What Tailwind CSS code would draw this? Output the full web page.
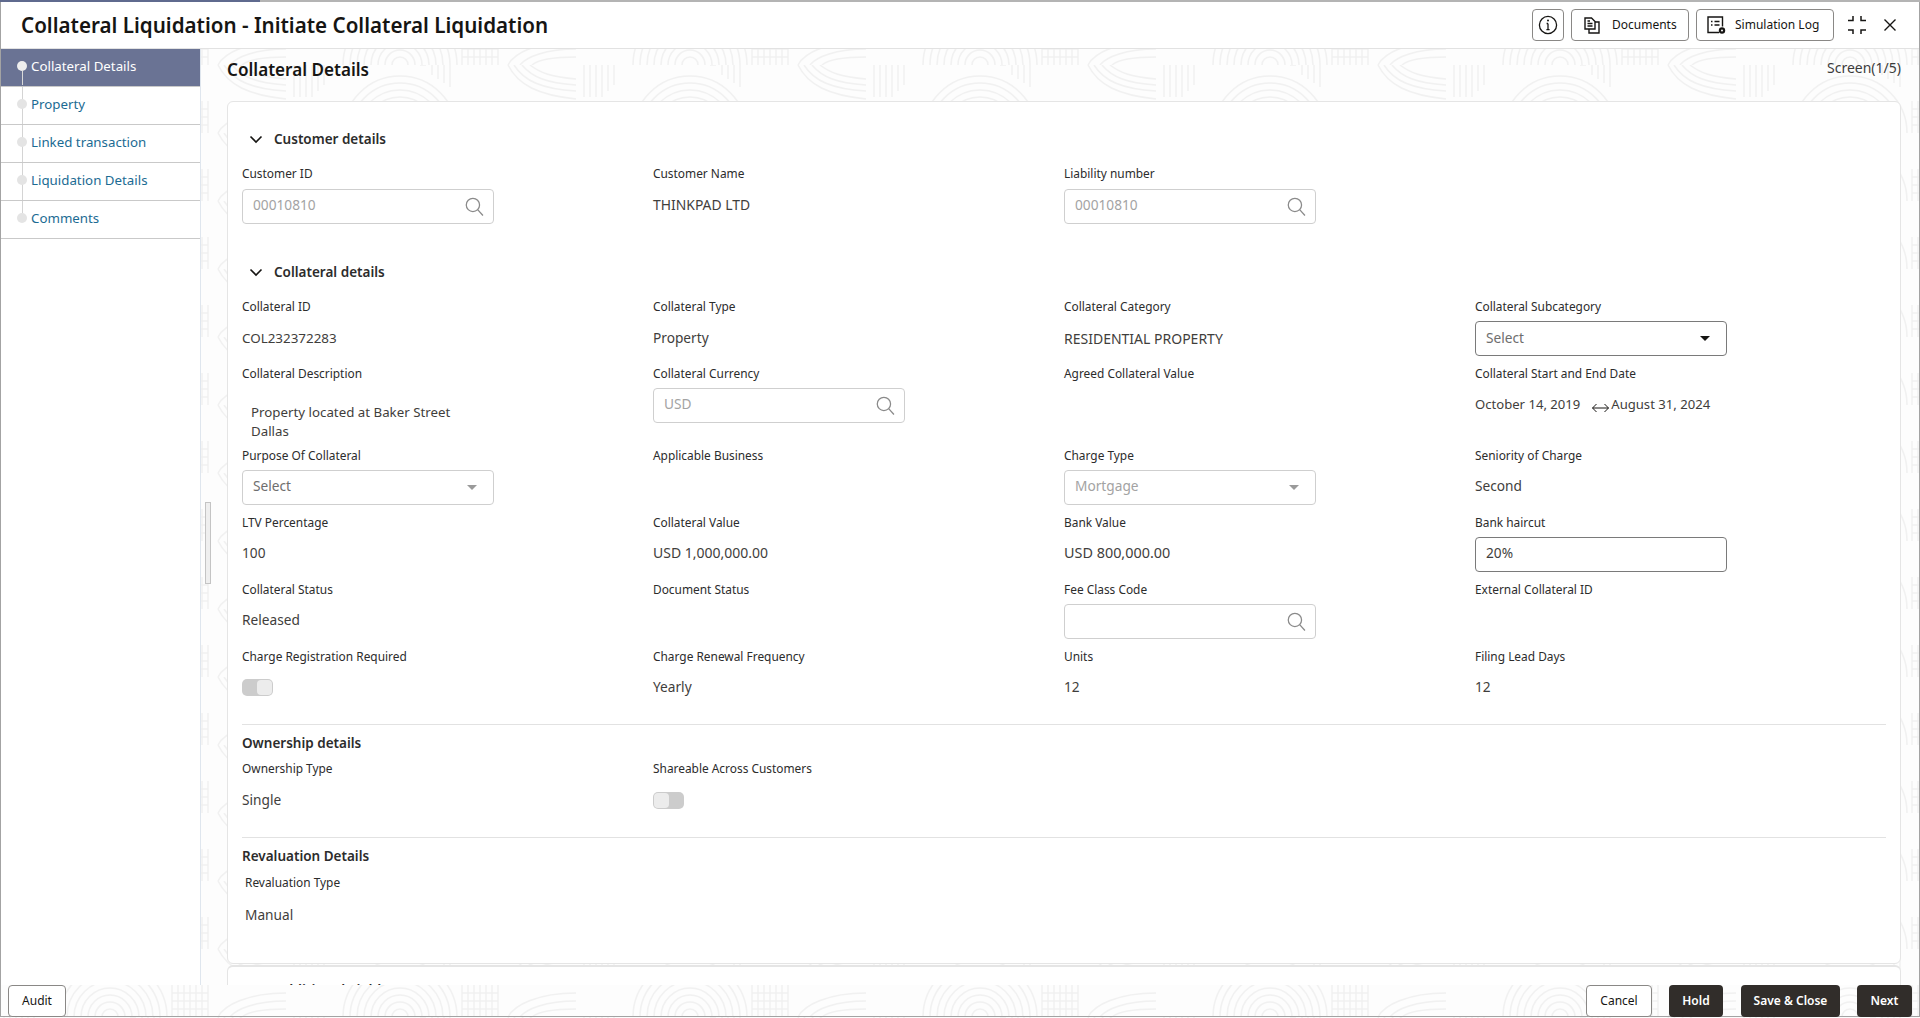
<!DOCTYPE html>
<html lang="en">
  <head>
    <meta charset="UTF-8" />
    <title>Collateral Liquidation</title>
    <script src="https://cdn.jsdelivr.net/npm/@tailwindcss/browser@4"></script>
  </head>
  <body class="bg-white font-['Noto_Sans',sans-serif] text-[#161513]">
    <div class="relative w-[1920px] h-[1018px] overflow-hidden bg-white">
      <!-- background swirl texture -->
      <svg class="absolute inset-0" width="1920" height="1018">
        <defs>
          <pattern id="swirl" x="0" y="65" width="290" height="68" patternUnits="userSpaceOnUse">
            <rect width="290" height="68" fill="#fdfdfd" />
            <g fill="none" stroke="#f1f1f1" stroke-width="1.5">
              <circle cx="110" cy="68" r="8" />
              <circle cx="110" cy="68" r="15" />
              <circle cx="110" cy="68" r="22" />
              <circle cx="110" cy="68" r="29" />
              <circle cx="110" cy="68" r="36" />
              <circle cx="110" cy="68" r="43" />
              <circle cx="110" cy="68" r="50" />
              <circle cx="110" cy="68" r="57" />
              <path d="M172 36V68M178 36V68M184 36V68M190 36V68M196 36V68M202 36V68M208 36V68M172 44H208M172 52H208M172 60H208" />
              <path d="M218 0c10 20 30 30 68 34M224 0c10 16 28 24 62 26M232 0c10 12 24 18 54 20M240 0c10 8 22 12 46 14M218 68c6-12 30-24 68-24M230 68c6-8 26-16 56-16M242 68c6-5 22-8 44-8" />
              <path d="M4 0V32M10 0V32M16 0V32M22 0V32M28 0V26M34 0V20" />
              <path d="M130 0h6M142 0V10M148 0V14M154 0V18M160 0V22" />
            </g>
          </pattern>
        </defs>
        <rect width="1920" height="1018" fill="url(#swirl)" />
      </svg>

      <div class="relative flex flex-col h-[1017px] border-x border-b border-[#a3a3a3]">
        <!-- progress strip -->
        <div class="flex h-[2px] bg-[#b4b4b4] -mx-px shrink-0">
          <div class="w-[260px] bg-[#5f6a8e]"></div>
        </div>

        <header class="flex items-center h-[47px] pl-5 pr-[23px] bg-white border-b border-[#e2e2e2] shrink-0">
          <h1 class="text-[20.6px] leading-none font-semibold text-[#161513]">Collateral Liquidation - Initiate Collateral Liquidation</h1>
          <div class="ml-auto flex items-center">
            <button class="flex items-center justify-center w-8 h-8 border border-[#8a8886] rounded-[4px]">
              <svg width="20" height="20" viewBox="0 0 20 20" fill="none" stroke="#161513" stroke-width="1.3"><circle cx="10" cy="10" r="8.600" /><path d="M10 8.500v6.200M8.400 14.700h3.200M8.600 8.500H10" /><circle cx="10" cy="5.600" r="1" fill="#161513" stroke="none" /></svg>
            </button>
            <button class="flex items-center w-[118px] h-8 ml-[7px] pl-[12px] border border-[#8a8886] rounded-[4px] text-[12px]">
              <svg width="16" height="17" viewBox="0 0 16 17" fill="none" stroke="#161513" stroke-width="1.400"><path d="M1 1h6.500L11 4.500V12H1z" /><path d="M3.500 6.500h5M3.500 9h5M3.500 4h2.500" /><path d="M11 5h4v11H5V12" /></svg>
              <span class="ml-[12px]">Documents</span>
            </button>
            <button class="flex items-center w-[138px] h-8 ml-[7px] pl-[10px] border border-[#8a8886] rounded-[4px] text-[12px]">
              <svg width="19" height="18" viewBox="0 0 19 18" fill="none" stroke="#161513" stroke-width="1.400"><path d="M12 16.500H1V1h14.500v9.500" /><path d="M4 5.500h1.500M7.500 5.500h5M4 9h1.500M7.500 9h5" /><circle cx="15" cy="14.500" r="3.200" fill="#161513" stroke="none" /><circle cx="15" cy="14.500" r="1" fill="#fff" stroke="none" /></svg>
              <span class="ml-[9px]">Simulation Log</span>
            </button>
            <button class="ml-[13px]">
              <svg class="block" width="20" height="20" viewBox="0 0 20 20" fill="none" stroke="#161513" stroke-width="1.500"><path d="M1 5.500h5V1M14 1v4.500h5M1 15h5v4M19 15h-5v4" /></svg>
            </button>
            <button class="ml-[17px]">
              <svg class="block" width="12" height="12" viewBox="0 0 12 12" fill="none" stroke="#161513" stroke-width="1.400"><path d="M.5.5l11 11M11.500.5l-11 11" /></svg>
            </button>
          </div>
        </header>

        <div class="flex flex-1 min-h-0">
          <!-- train -->
          <nav class="w-[199px] bg-white shrink-0 text-[13.3px] text-[#1b6b93]">
            <a class="relative flex items-center h-[38px] pb-[2px] pl-[30px] bg-[#6a7394] border-b border-[#c9c9c9] text-white">
              <i class="absolute left-[16px] top-[12px] w-[10px] h-[10px] rounded-full bg-[#eeeeee]"></i>
              <i class="absolute left-[21px] top-[22px] w-px h-[14px] bg-[#d9d9d9]"></i>
              Collateral Details
            </a>
            <a class="relative flex items-center h-[38px] pb-[2px] pl-[30px] border-b border-[#c9c9c9]">
              <i class="absolute left-[21px] top-0 w-px h-[37px] bg-[#d4d4d4]"></i>
              <i class="absolute left-[16px] top-[12px] w-[10px] h-[10px] rounded-full bg-[#e4e4e4]"></i>
              Property
            </a>
            <a class="relative flex items-center h-[38px] pb-[2px] pl-[30px] border-b border-[#c9c9c9]">
              <i class="absolute left-[21px] top-0 w-px h-[37px] bg-[#d4d4d4]"></i>
              <i class="absolute left-[16px] top-[12px] w-[10px] h-[10px] rounded-full bg-[#e4e4e4]"></i>
              Linked transaction
            </a>
            <a class="relative flex items-center h-[38px] pb-[2px] pl-[30px] border-b border-[#c9c9c9]">
              <i class="absolute left-[21px] top-0 w-px h-[37px] bg-[#d4d4d4]"></i>
              <i class="absolute left-[16px] top-[12px] w-[10px] h-[10px] rounded-full bg-[#e4e4e4]"></i>
              Liquidation Details
            </a>
            <a class="relative flex items-center h-[38px] pb-[2px] pl-[30px] border-b border-[#c9c9c9]">
              <i class="absolute left-[21px] top-0 w-[1px] h-[12px] bg-[#d4d4d4]"></i>
              <i class="absolute left-[16px] top-[12px] w-[10px] h-[10px] rounded-full bg-[#e4e4e4]"></i>
              Comments
            </a>
          </nav>

          <!-- main content -->
          <main class="relative flex-1 min-w-0 overflow-hidden border-l border-[#dfe6ee] pl-[26px] pr-[18px]">
            <div class="absolute left-[4px] top-[453px] w-[6px] h-[82px] border border-[#c4c4c4] bg-[#efefef]"></div>

            <div class="flex items-start justify-between h-[52px] pt-[8px]">
              <h2 class="text-[17.1px] leading-[26px] font-semibold">Collateral Details</h2>
              <span class="text-[14px] leading-[22px] text-[#3c3c3c]">Screen(1/5)</span>
            </div>

            <section class="h-[863px] pl-[14px] pt-[25px] bg-white border border-[#e5e5e5] rounded-[6px]">
              <div class="flex items-center h-[24px] mb-[13px] text-[13.5px] font-semibold text-[#2c2c2c]">
                <svg class="ml-[7px] mr-[11px]" width="14" height="9" viewBox="0 0 14 9" fill="none" stroke="#161513" stroke-width="1.600"><path d="M1.500 1.500L7 7l5.500-5.500" /></svg>
                Customer details
              </div>
              <div class="grid grid-cols-[411px_411px_411px_411px] text-[#3f3e3c]">
                <div>
                  <div class="h-[18px] mb-[7px] text-[11.9px] leading-[18px] text-[#2c2c2c]">Customer ID</div>
                  <div class="flex items-center justify-between w-[252px] h-[35px] pl-[10px] pr-[9px] border border-[#cfcfcf] rounded-[4px] text-[13.7px] text-[#a3a3a3]">
                    <span class="pb-[2px]">00010810</span>
                    <svg width="19" height="19" viewBox="0 0 18 18" fill="none" stroke="#8a8a8a" stroke-width="1.200"><circle cx="7.500" cy="7.500" r="6.300" /><path d="M12 12l5 5.500" /></svg>
                  </div>
                </div>
                <div>
                  <div class="h-[18px] mb-[7px] text-[11.9px] leading-[18px] text-[#2c2c2c]">Customer Name</div>
                  <div class="flex items-center h-[34px] pb-[2px] text-[13.900px]">THINKPAD LTD</div>
                </div>
                <div>
                  <div class="h-[18px] mb-[7px] text-[11.9px] leading-[18px] text-[#2c2c2c]">Liability number</div>
                  <div class="flex items-center justify-between w-[252px] h-[35px] pl-[10px] pr-[9px] border border-[#cfcfcf] rounded-[4px] text-[13.7px] text-[#a3a3a3]">
                    <span class="pb-[2px]">00010810</span>
                    <svg width="19" height="19" viewBox="0 0 18 18" fill="none" stroke="#8a8a8a" stroke-width="1.200"><circle cx="7.500" cy="7.500" r="6.300" /><path d="M12 12l5 5.500" /></svg>
                  </div>
                </div>
              </div>

              <div class="flex items-center h-[24px] mt-[36px] mb-[13px] text-[13.5px] font-semibold text-[#2c2c2c]">
                <svg class="ml-[7px] mr-[11px]" width="14" height="9" viewBox="0 0 14 9" fill="none" stroke="#161513" stroke-width="1.600"><path d="M1.500 1.500L7 7l5.500-5.500" /></svg>
                Collateral details
              </div>

              <div class="grid grid-cols-[411px_411px_411px_411px] auto-rows-[67px] text-[13.7px] text-[#3f3e3c]">
                <div>
                  <div class="h-[18px] mb-[6px] text-[11.9px] leading-[18px] text-[#2c2c2c]">Collateral ID</div>
                  <div class="flex items-center h-[34px] text-[13.400px]">COL232372283</div>
                </div>
                <div>
                  <div class="h-[18px] mb-[6px] text-[11.9px] leading-[18px] text-[#2c2c2c]">Collateral Type</div>
                  <div class="flex items-center h-[34px]">Property</div>
                </div>
                <div>
                  <div class="h-[18px] mb-[6px] text-[11.9px] leading-[18px] text-[#2c2c2c]">Collateral Category</div>
                  <div class="flex items-center h-[34px] text-[14px]">RESIDENTIAL PROPERTY</div>
                </div>
                <div>
                  <div class="h-[18px] mb-[6px] text-[11.9px] leading-[18px] text-[#2c2c2c]">Collateral Subcategory</div>
                  <div class="flex items-center justify-between w-[252px] h-[35px] pl-[10px] pr-[16px] border border-[#7a7a7a] rounded-[4px] text-[#6e6e6e]">
                    <span class="pb-[1px]">Select</span>
                    <i class="border-x-[5px] border-t-[5px] border-x-transparent border-t-[#161513]"></i>
                  </div>
                </div>

                <div class="h-[82px]">
                  <div class="h-[18px] mb-[21px] text-[11.9px] leading-[18px] text-[#2c2c2c]">Collateral Description</div>
                  <div class="pl-[9px] text-[13.3px] leading-[19px]">Property located at Baker Street<br />Dallas</div>
                </div>
                <div>
                  <div class="h-[18px] mb-[6px] text-[11.9px] leading-[18px] text-[#2c2c2c]">Collateral Currency</div>
                  <div class="flex items-center justify-between w-[252px] h-[35px] pl-[10px] pr-[9px] border border-[#cfcfcf] rounded-[4px] text-[#a3a3a3]">
                    <span class="pb-[2px]">USD</span>
                    <svg width="19" height="19" viewBox="0 0 18 18" fill="none" stroke="#8a8a8a" stroke-width="1.200"><circle cx="7.500" cy="7.500" r="6.300" /><path d="M12 12l5 5.500" /></svg>
                  </div>
                </div>
                <div>
                  <div class="h-[18px] text-[11.9px] leading-[18px] text-[#2c2c2c]">Agreed Collateral Value</div>
                </div>
                <div>
                  <div class="h-[18px] mb-[6px] text-[11.9px] leading-[18px] text-[#2c2c2c]">Collateral Start and End Date</div>
                  <div class="flex items-center h-[34px] pb-[1px] text-[13.100px]">
                    October 14, 2019
                    <svg class="ml-[12px] mt-[6px]" width="17" height="10" viewBox="0 0 17 10" fill="none" stroke="#161513" stroke-width="1"><path d="M.5 5h16M4.500 1L.5 5l4 4M12.500 1l4 4-4 4" /></svg>
                    <span class="ml-[2px]">August 31, 2024</span>
                  </div>
                </div>

                <div class="mt-[15px]">
                  <div class="h-[18px] mb-[6px] text-[11.9px] leading-[18px] text-[#2c2c2c]">Purpose Of Collateral</div>
                  <div class="flex items-center justify-between w-[252px] h-[35px] pl-[10px] pr-[16px] border border-[#cfcfcf] rounded-[4px] text-[#6e6e6e]">
                    <span class="pb-[2px]">Select</span>
                    <i class="border-x-[5px] border-t-[5px] border-x-transparent border-t-[#9a9a9a]"></i>
                  </div>
                </div>
                <div class="mt-[15px]">
                  <div class="h-[18px] text-[11.9px] leading-[18px] text-[#2c2c2c]">Applicable Business</div>
                </div>
                <div class="mt-[15px]">
                  <div class="h-[18px] mb-[6px] text-[11.9px] leading-[18px] text-[#2c2c2c]">Charge Type</div>
                  <div class="flex items-center justify-between w-[252px] h-[35px] pl-[10px] pr-[16px] border border-[#cfcfcf] rounded-[4px] text-[#a3a3a3]">
                    <span class="pb-[2px]">Mortgage</span>
                    <i class="border-x-[5px] border-t-[5px] border-x-transparent border-t-[#9a9a9a]"></i>
                  </div>
                </div>
                <div class="mt-[15px]">
                  <div class="h-[18px] mb-[6px] text-[11.9px] leading-[18px] text-[#2c2c2c]">Seniority of Charge</div>
                  <div class="flex items-center h-[34px] pb-[2px]">Second</div>
                </div>

                <div class="mt-[15px]">
                  <div class="h-[18px] mb-[6px] text-[11.9px] leading-[18px] text-[#2c2c2c]">LTV Percentage</div>
                  <div class="flex items-center h-[34px] pb-[2px]">100</div>
                </div>
                <div class="mt-[15px]">
                  <div class="h-[18px] mb-[6px] text-[11.9px] leading-[18px] text-[#2c2c2c]">Collateral Value</div>
                  <div class="flex items-center h-[34px] pb-[3px] text-[14px]">USD 1,000,000.00</div>
                </div>
                <div class="mt-[15px]">
                  <div class="h-[18px] mb-[6px] text-[11.9px] leading-[18px] text-[#2c2c2c]">Bank Value</div>
                  <div class="flex items-center h-[34px] pb-[2px] text-[14.400px]">USD 800,000.00</div>
                </div>
                <div class="mt-[15px]">
                  <div class="h-[18px] mb-[6px] text-[11.9px] leading-[18px] text-[#2c2c2c]">Bank haircut</div>
                  <div class="flex items-center w-[252px] h-[35px] pl-[10px] pb-[2px] border border-[#7a7a7a] rounded-[4px]">20%</div>
                </div>

                <div class="mt-[15px]">
                  <div class="h-[18px] mb-[6px] text-[11.9px] leading-[18px] text-[#2c2c2c]">Collateral Status</div>
                  <div class="flex items-center h-[34px] pb-[2px]">Released</div>
                </div>
                <div class="mt-[15px]">
                  <div class="h-[18px] text-[11.9px] leading-[18px] text-[#2c2c2c]">Document Status</div>
                </div>
                <div class="mt-[15px]">
                  <div class="h-[18px] mb-[6px] text-[11.9px] leading-[18px] text-[#2c2c2c]">Fee Class Code</div>
                  <div class="flex items-center justify-end w-[252px] h-[35px] pr-[9px] border border-[#cfcfcf] rounded-[4px]">
                    <svg width="19" height="19" viewBox="0 0 18 18" fill="none" stroke="#8a8a8a" stroke-width="1.200"><circle cx="7.500" cy="7.500" r="6.300" /><path d="M12 12l5 5.500" /></svg>
                  </div>
                </div>
                <div class="mt-[15px]">
                  <div class="h-[18px] text-[11.9px] leading-[18px] text-[#2c2c2c]">External Collateral ID</div>
                </div>

                <div class="mt-[15px]">
                  <div class="h-[18px] mb-[6px] text-[11.9px] leading-[18px] text-[#2c2c2c]">Charge Registration Required</div>
                  <div class="flex items-center h-[34px] pb-[2px]">
                    <div class="flex justify-end w-[31px] h-[17px] p-px bg-[#cccccc] rounded-[5px]"><i class="w-[15px] h-[15px] bg-[#ececec] rounded-[4px]"></i></div>
                  </div>
                </div>
                <div class="mt-[15px]">
                  <div class="h-[18px] mb-[6px] text-[11.9px] leading-[18px] text-[#2c2c2c]">Charge Renewal Frequency</div>
                  <div class="flex items-center h-[34px] pb-[2px]">Yearly</div>
                </div>
                <div class="mt-[15px]">
                  <div class="h-[18px] mb-[6px] text-[11.9px] leading-[18px] text-[#2c2c2c]">Units</div>
                  <div class="flex items-center h-[34px] pb-[2px]">12</div>
                </div>
                <div class="mt-[15px]">
                  <div class="h-[18px] mb-[6px] text-[11.9px] leading-[18px] text-[#2c2c2c]">Filing Lead Days</div>
                  <div class="flex items-center h-[34px] pb-[2px]">12</div>
                </div>
              </div>

              <div class="mt-[25px] mr-[14px] border-t border-[#e2e2e2]"></div>
              <div class="h-[24px] mt-[6px] mb-[4px] text-[13.5px] leading-[24px] font-semibold text-[#2c2c2c]">Ownership details</div>
              <div class="grid grid-cols-[411px_411px_411px_411px] text-[13.7px] text-[#3f3e3c]">
                <div>
                  <div class="h-[18px] mb-[7px] text-[11.9px] leading-[18px] text-[#2c2c2c]">Ownership Type</div>
                  <div class="flex items-center h-[34px] pb-[2px]">Single</div>
                </div>
                <div>
                  <div class="h-[18px] mb-[7px] text-[11.9px] leading-[18px] text-[#2c2c2c]">Shareable Across Customers</div>
                  <div class="flex items-center h-[34px] pb-[2px]">
                    <div class="w-[31px] h-[17px] p-px bg-[#cccccc] rounded-[5px]"><i class="block w-[15px] h-[15px] bg-[#ececec] rounded-[4px]"></i></div>
                  </div>
                </div>
              </div>

              <div class="mt-[19px] mr-[14px] border-t border-[#e2e2e2]"></div>
              <div class="h-[24px] mt-[6px] mb-[5px] text-[13.5px] leading-[24px] font-semibold text-[#2c2c2c]">Revaluation Details</div>
              <div class="pl-[3px] text-[13.7px] text-[#3f3e3c]">
                <div class="h-[18px] mb-[7px] text-[11.9px] leading-[18px] text-[#2c2c2c]">Revaluation Type</div>
                <div class="flex items-center h-[34px]">Manual</div>
              </div>
            </section>

            <section class="h-[60px] mt-px pl-[47px] pt-[12px] bg-white border-t-2 border-x border-[#e5e5e5] rounded-t-[6px] text-[14px] font-semibold text-[#2c2c2c]">Additional Fields</section>
          </main>
        </div>

        <footer class="flex items-center h-[31px] pl-[7px] pr-[7px] shrink-0 text-[12px]">
          <button class="w-[58px] h-[32px] bg-white border border-[#8a8886] rounded-[4px]">Audit</button>
          <button class="ml-auto w-[66px] h-[32px] bg-white border border-[#8a8886] rounded-[4px]">Cancel</button>
          <button class="ml-[17px] w-[54px] h-[32px] bg-[#312d2a] rounded-[4px] font-semibold text-white">Hold</button>
          <button class="ml-[18px] w-[99px] h-[32px] bg-[#312d2a] rounded-[4px] font-semibold text-white">Save &amp; Close</button>
          <button class="ml-[17px] w-[55px] h-[32px] bg-[#312d2a] rounded-[4px] font-semibold text-white">Next</button>
        </footer>
      </div>
    </div>
  </body>
</html>
